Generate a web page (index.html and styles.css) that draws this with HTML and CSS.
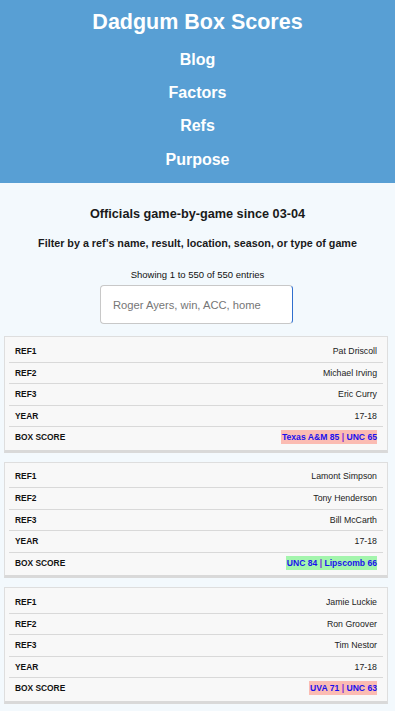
FILE: index.html
```html
<!DOCTYPE html>
<html lang="en">
<head>
<meta charset="utf-8">
<title>Dadgum Box Scores</title>
<link rel="stylesheet" href="styles.css">
</head>
<body>
<header class="site-header">
  <h1 class="site-title">Dadgum Box Scores</h1>
  <nav class="site-nav">
    <a class="nav-link" href="#">Blog</a>
    <a class="nav-link" href="#">Factors</a>
    <a class="nav-link" href="#">Refs</a>
    <a class="nav-link" href="#">Purpose</a>
  </nav>
</header>
<main class="content">
  <h2 class="page-heading">Officials game-by-game since 03-04</h2>
  <p class="filter-note">Filter by a ref’s name, result, location, season, or type of game</p>
  <p class="entries-info">Showing 1 to 550 of 550 entries</p>
  <div class="search-wrap">
    <input class="search-input" type="text" placeholder="Roger Ayers, win, ACC, home">
  </div>

  <section class="card">
    <div class="row"><span class="label">REF1</span><span class="value">Pat Driscoll</span></div>
    <div class="row"><span class="label">REF2</span><span class="value">Michael Irving</span></div>
    <div class="row"><span class="label">REF3</span><span class="value">Eric Curry</span></div>
    <div class="row"><span class="label">YEAR</span><span class="value">17-18</span></div>
    <div class="row"><span class="label">BOX SCORE</span><a class="score loss" href="#">Texas A&amp;M 85 <span class="pipe">|</span> UNC 65</a></div>
  </section>

  <section class="card">
    <div class="row"><span class="label">REF1</span><span class="value">Lamont Simpson</span></div>
    <div class="row"><span class="label">REF2</span><span class="value">Tony Henderson</span></div>
    <div class="row"><span class="label">REF3</span><span class="value">Bill McCarth</span></div>
    <div class="row"><span class="label">YEAR</span><span class="value">17-18</span></div>
    <div class="row"><span class="label">BOX SCORE</span><a class="score win" href="#">UNC 84 <span class="pipe">|</span> Lipscomb 66</a></div>
  </section>

  <section class="card">
    <div class="row"><span class="label">REF1</span><span class="value">Jamie Luckie</span></div>
    <div class="row"><span class="label">REF2</span><span class="value">Ron Groover</span></div>
    <div class="row"><span class="label">REF3</span><span class="value">Tim Nestor</span></div>
    <div class="row"><span class="label">YEAR</span><span class="value">17-18</span></div>
    <div class="row"><span class="label">BOX SCORE</span><a class="score loss" href="#">UVA 71 <span class="pipe">|</span> UNC 63</a></div>
  </section>
</main>
</body>
</html>
```

FILE: styles.css
```css
* {
  box-sizing: border-box;
}

html, body {
  margin: 0;
  padding: 0;
}

body {
  background: #f3f9fd;
  font-family: "Liberation Sans", Arial, Helvetica, sans-serif;
  color: #111;
}

.site-header {
  background: #589fd4;
  padding: 8.5px 0 7px;
  text-align: center;
}

.site-title {
  margin: 0;
  font-size: 21.5px;
  line-height: 26px;
  font-weight: bold;
  color: #fff;
}

.site-nav {
  display: flex;
  flex-direction: column;
  align-items: center;
  margin-top: 8.3px;
}

.nav-link {
  display: block;
  color: #fff;
  text-decoration: none;
  font-weight: bold;
  font-size: 16px;
  line-height: 33.3px;
}

.content {
  padding: 0 0 10px;
}

.page-heading {
  margin: 23px 0 0;
  text-align: center;
  font-size: 12.7px;
  line-height: 16px;
  font-weight: bold;
  color: #1a1a1a;
}

.filter-note {
  margin: 14.4px 0 0;
  text-align: center;
  font-size: 10.75px;
  line-height: 14px;
  font-weight: bold;
  color: #1a1a1a;
}

.entries-info {
  margin: 19px 0 0;
  text-align: center;
  font-size: 9.5px;
  line-height: 12px;
  color: #111;
}

.search-wrap {
  display: flex;
  justify-content: center;
  margin-top: 3.8px;
  padding-right: 2px;
}

.search-input {
  width: 193px;
  height: 39px;
  margin: 0;
  padding: 0 0 0 12px;
  border: 1px solid #c8c8c8;
  border-right: 1.5px solid #2f6fce;
  border-radius: 4px;
  background: #fff;
  font-family: "Liberation Sans", Arial, Helvetica, sans-serif;
  font-size: 11.2px;
  color: #333;
  outline: none;
}

.search-input::placeholder {
  color: #767676;
}

.card {
  margin: 12px 7px 9px 4px;
  background: #f8f8f8;
  border: 1px solid #dedede;
  border-bottom: 3px solid #d9d9d9;
  padding: 3px 4px 2px;
}

.card + .card {
  margin-top: 0;
}

.row {
  display: flex;
  justify-content: space-between;
  align-items: center;
  height: 21.5px;
  padding: 0 6px;
}

.row + .row {
  border-top: 1px solid #d9d9d9;
}

.label {
  font-size: 8.4px;
  font-weight: bold;
  color: #111;
}

.value {
  font-size: 8.75px;
  color: #222;
}

.score {
  display: inline-block;
  font-size: 8.6px;
  line-height: 14px;
  font-weight: bold;
  color: #1a10ee;
  text-decoration: none;
  padding: 0 0 0 1px;
}

.score.loss {
  background: #fbbcb3;
}

.score.win {
  background: #a3f5ad;
}

.pipe {
  color: #7a2bd6;
}
```
